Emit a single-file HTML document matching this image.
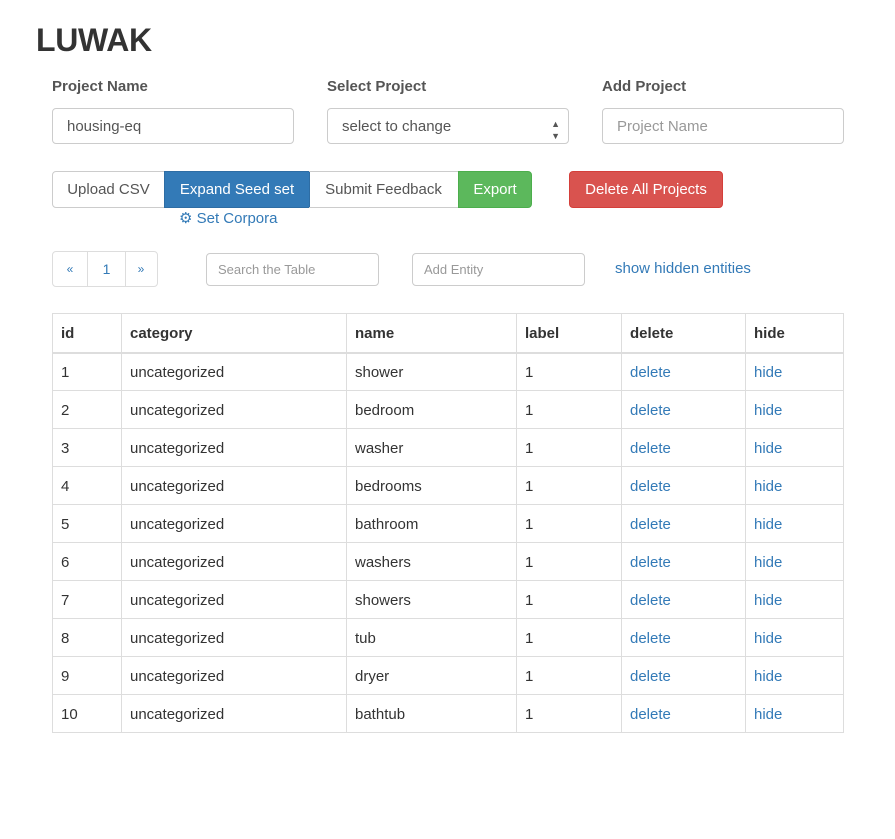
<!DOCTYPE html><html><head><style>
body{margin:0;background:#fff;font-family:"Liberation Sans",sans-serif;color:#333;width:895px;height:839px;position:relative;overflow:hidden}
.a{position:absolute}
h1{position:absolute;left:36px;top:22px;margin:0;font-size:32px;font-weight:bold;color:#333;letter-spacing:-0.3px}
.lbl{font-size:15px;font-weight:bold;color:#555;top:78px}
.inp{border:1px solid #ccc;border-radius:4px;box-sizing:border-box;height:36px;top:108px;width:242px;font-size:15px;padding:0 14px;line-height:36px}
.btn{top:171px;height:37px;box-sizing:border-box;font-size:15px;line-height:36px;text-align:center;border:1px solid #ccc;color:#555}
a,.lk{color:#337ab7}
table{position:absolute;left:52px;top:313px;border-collapse:collapse;width:792px;font-size:15px}
td,th{border:1px solid #ddd;height:38px;padding:2px 8px 0;text-align:left;box-sizing:border-box}
th{border-bottom:2px solid #ddd;height:39px}
</style></head><body>
<h1>LUWAK</h1>
<div class="a lbl" style="left:52px">Project Name</div>
<div class="a lbl" style="left:327px">Select Project</div>
<div class="a lbl" style="left:602px">Add Project</div>
<div class="a inp" style="left:52px;color:#555">housing-eq</div>
<div class="a inp" style="left:327px;color:#555">select to change<span style="position:absolute;right:8px;font-size:9px;line-height:12px;top:9px">▲<br>▼</span></div>
<div class="a inp" style="left:602px;color:#999">Project Name</div>
<div class="a btn" style="left:52px;width:113px;border-radius:4px 0 0 4px">Upload CSV</div>
<div class="a btn" style="left:164px;width:146px;background:#337ab7;border-color:#2e6da4;color:#fff">Expand Seed set</div>
<div class="a btn" style="left:309px;width:150px;border-left:none">Submit Feedback</div>
<div class="a btn" style="left:458px;width:74px;background:#5cb85c;border-color:#4cae4c;color:#fff;border-radius:0 4px 4px 0">Export</div>
<div class="a btn" style="left:569px;width:154px;background:#d9534f;border-color:#d43f3a;color:#fff;border-radius:4px">Delete All Projects</div>
<div class="a lk" style="left:179px;top:209px;font-size:15px">⚙ Set Corpora</div>
<div class="a" style="left:52px;top:251px;width:106px;height:36px;border:1px solid #ddd;border-radius:4px;box-sizing:border-box;font-size:14px;color:#337ab7">
<span class="a" style="left:0;width:34px;top:10px;text-align:center;font-size:12px">«</span>
<span class="a" style="left:34px;width:37px;top:0;bottom:0;border-left:1px solid #ddd;border-right:1px solid #ddd;text-align:center;line-height:34px">1</span>
<span class="a" style="left:71px;width:34px;top:10px;text-align:center;font-size:12px">»</span></div>
<div class="a inp" style="left:206px;top:253px;width:173px;height:33px;font-size:13px;line-height:32px;padding:0 11px;color:#999">Search the Table</div>
<div class="a inp" style="left:412px;top:253px;width:173px;height:33px;font-size:13px;line-height:32px;padding:0 11px;color:#999">Add Entity</div>
<div class="a lk" style="left:615px;top:260px;font-size:15px">show hidden entities</div>
<table>
<tr><th style="width:69px">id</th><th style="width:225px">category</th><th style="width:170px">name</th><th style="width:105px">label</th><th style="width:124px">delete</th><th>hide</th></tr>
<tr><td>1</td><td>uncategorized</td><td>shower</td><td>1</td><td><a>delete</a></td><td><a>hide</a></td></tr>
<tr><td>2</td><td>uncategorized</td><td>bedroom</td><td>1</td><td><a>delete</a></td><td><a>hide</a></td></tr>
<tr><td>3</td><td>uncategorized</td><td>washer</td><td>1</td><td><a>delete</a></td><td><a>hide</a></td></tr>
<tr><td>4</td><td>uncategorized</td><td>bedrooms</td><td>1</td><td><a>delete</a></td><td><a>hide</a></td></tr>
<tr><td>5</td><td>uncategorized</td><td>bathroom</td><td>1</td><td><a>delete</a></td><td><a>hide</a></td></tr>
<tr><td>6</td><td>uncategorized</td><td>washers</td><td>1</td><td><a>delete</a></td><td><a>hide</a></td></tr>
<tr><td>7</td><td>uncategorized</td><td>showers</td><td>1</td><td><a>delete</a></td><td><a>hide</a></td></tr>
<tr><td>8</td><td>uncategorized</td><td>tub</td><td>1</td><td><a>delete</a></td><td><a>hide</a></td></tr>
<tr><td>9</td><td>uncategorized</td><td>dryer</td><td>1</td><td><a>delete</a></td><td><a>hide</a></td></tr>
<tr><td>10</td><td>uncategorized</td><td>bathtub</td><td>1</td><td><a>delete</a></td><td><a>hide</a></td></tr>
</table>
</body></html>
